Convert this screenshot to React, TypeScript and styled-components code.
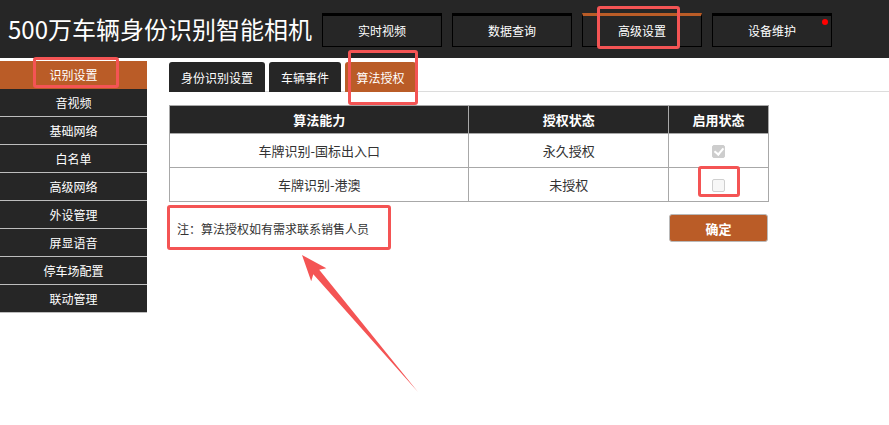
import React from "react";
import styled, { createGlobalStyle, css } from "styled-components";

const ORANGE = "#ba5c27";
const DARK = "#262626";
const MARK = "#f45454";

const GlobalStyle = createGlobalStyle`
  html, body {
    margin: 0;
    padding: 0;
    background: #fff;
  }
  body {
    font-family: "Noto Sans CJK SC", "Noto Sans", "Liberation Sans", sans-serif;
    color: #333;
  }
  * { box-sizing: border-box; }
`;

const Page = styled.div`
  position: relative;
  width: 889px;
  min-height: 425px;
  overflow: hidden;
`;

/* ---------- top bar ---------- */
const Header = styled.header`
  display: flex;
  align-items: flex-start;
  height: 58px;
  background: ${DARK};
`;

const Title = styled.h1`
  margin: 0;
  width: 322px;
  padding-left: 8px;
  font-size: 24px;
  font-weight: 400;
  line-height: 58px;
  color: #fff;
  white-space: nowrap;
`;

const Nav = styled.nav`
  display: flex;
  gap: 10px;
  padding-top: 13px;
`;

const NavButton = styled.div<{ $active?: boolean }>`
  position: relative;
  width: 120px;
  height: 34px;
  display: flex;
  align-items: center;
  justify-content: center;
  border: 1px solid #000;
  border-top: 3px solid ${(p) => (p.$active ? ORANGE : "#000")};
  background: ${DARK};
  color: #fff;
  font-size: 12px;
  line-height: 1;
  cursor: pointer;
`;

const Dot = styled.span`
  position: absolute;
  top: 3px;
  right: 3px;
  width: 6px;
  height: 6px;
  border-radius: 50%;
  background: #ff0000;
`;

/* ---------- body ---------- */
const Body = styled.div`
  display: flex;
  align-items: flex-start;
  padding-top: 3px;
`;

const Sidebar = styled.ul`
  list-style: none;
  margin: 0;
  padding: 0;
  width: 147px;
  flex: none;
  background: ${DARK};
`;

const SideItem = styled.li<{ $active?: boolean }>`
  height: 28px;
  display: flex;
  align-items: center;
  justify-content: center;
  font-size: 12px;
  color: #fff;
  border-bottom: 1px solid #bdbdbd;
  cursor: pointer;
  ${(p) =>
    p.$active &&
    css`
      background: ${ORANGE};
      border-bottom-color: ${ORANGE};
    `}
`;

const Main = styled.main`
  flex: 1;
  padding-left: 22px;
  padding-top: 1px;
`;

const TabBar = styled.div`
  display: flex;
  gap: 4px;
  border-bottom: 1px solid #dcdcdc;
`;

const Tab = styled.div<{ $active?: boolean; $w: number }>`
  width: ${(p) => p.$w}px;
  height: 30px;
  margin-bottom: -1px;
  display: flex;
  align-items: center;
  justify-content: center;
  border-radius: 3px 3px 0 0;
  background: ${(p) => (p.$active ? ORANGE : DARK)};
  color: #fff;
  font-size: 12px;
  cursor: pointer;
`;

const Table = styled.table`
  margin-top: 13px;
  width: 600px;
  border-collapse: collapse;
  font-size: 13px;
  color: #333;
`;

const Th = styled.th<{ $w: number }>`
  width: ${(p) => p.$w}px;
  height: 28px;
  padding: 0;
  background: ${DARK};
  color: #fff;
  font-weight: 700;
  font-size: 13px;
  border: 1px solid #a8a8a8;
  text-align: center;
`;

const Td = styled.td`
  height: 34px;
  padding: 0;
  border: 1px solid #a8a8a8;
  text-align: center;
  vertical-align: middle;
`;

const Check = styled.input.attrs({ type: "checkbox" })`
  appearance: none;
  margin: 0;
  width: 13px;
  height: 13px;
  vertical-align: middle;
  border: 1px solid #cfcfcf;
  border-radius: 2px;
  background: #f7f7f7;
  position: relative;
  top: -1px;
  &:checked {
    background: #cdcdcd;
    border-color: #cdcdcd;
  }
  &:checked::after {
    content: "";
    position: absolute;
    left: 3px;
    top: 0px;
    width: 4px;
    height: 7px;
    border: solid #fff;
    border-width: 0 2px 2px 0;
    transform: rotate(40deg);
  }
`;

const Footer = styled.div`
  width: 600px;
  margin-top: 12px;
  display: flex;
  align-items: center;
  justify-content: space-between;
`;

const Note = styled.p`
  margin: 0;
  padding-left: 8px;
  font-size: 12px;
  color: #333;
`;

const ConfirmButton = styled.button`
  width: 99px;
  height: 28px;
  margin-right: 1px;
  border: 1px solid #b9b9b9;
  border-radius: 3px;
  background: ${ORANGE};
  color: #fff;
  font-family: inherit;
  font-size: 13px;
  font-weight: 700;
  cursor: pointer;
`;

/* ---------- red annotation layer ---------- */
const Mark = styled.div<{ $x: number; $y: number; $w: number; $h: number }>`
  position: absolute;
  left: ${(p) => p.$x}px;
  top: ${(p) => p.$y}px;
  width: ${(p) => p.$w}px;
  height: ${(p) => p.$h}px;
  border: 3px solid ${MARK};
  border-radius: 3px;
  pointer-events: none;
`;

const ArrowLayer = styled.svg`
  position: absolute;
  left: 0;
  top: 0;
  pointer-events: none;
`;

const sideItems = [
  "识别设置",
  "音视频",
  "基础网络",
  "白名单",
  "高级网络",
  "外设管理",
  "屏显语音",
  "停车场配置",
  "联动管理",
];

const rows = [
  { name: "车牌识别-国标出入口", state: "永久授权", on: true },
  { name: "车牌识别-港澳", state: "未授权", on: false },
];

export default function App() {
  return (
    <Page>
      <GlobalStyle />
      <Header>
        <Title>500万车辆身份识别智能相机</Title>
        <Nav>
          <NavButton>实时视频</NavButton>
          <NavButton>数据查询</NavButton>
          <NavButton $active>高级设置</NavButton>
          <NavButton>
            设备维护
            <Dot />
          </NavButton>
        </Nav>
      </Header>

      <Body>
        <Sidebar>
          {sideItems.map((s, i) => (
            <SideItem key={s} $active={i === 0}>
              {s}
            </SideItem>
          ))}
        </Sidebar>

        <Main>
          <TabBar>
            <Tab $w={96}>身份识别设置</Tab>
            <Tab $w={72}>车辆事件</Tab>
            <Tab $w={71} $active>
              算法授权
            </Tab>
          </TabBar>

          <Table>
            <thead>
              <tr>
                <Th $w={300}>算法能力</Th>
                <Th $w={200}>授权状态</Th>
                <Th $w={100}>启用状态</Th>
              </tr>
            </thead>
            <tbody>
              {rows.map((r) => (
                <tr key={r.name}>
                  <Td>{r.name}</Td>
                  <Td>{r.state}</Td>
                  <Td>
                    <Check defaultChecked={r.on} disabled={r.on} />
                  </Td>
                </tr>
              ))}
            </tbody>
          </Table>

          <Footer>
            <Note>注：算法授权如有需求联系销售人员</Note>
            <ConfirmButton>确定</ConfirmButton>
          </Footer>
        </Main>
      </Body>

      <Mark $x={597} $y={6} $w={83} $h={43} />
      <Mark $x={33} $y={57} $w={86} $h={31} />
      <Mark $x={348} $y={50} $w={70} $h={55} />
      <Mark $x={698} $y={166} $w={42} $h={31} />
      <Mark $x={167} $y={205} $w={224} $h={45} />

      <ArrowLayer width={889} height={425} viewBox="0 0 889 425">
        <polygon
          points="302,255 326.4,268.3 319.2,269.8 418,392 313.3,274.3 311.2,281.3"
          fill={MARK}
        />
      </ArrowLayer>
    </Page>
  );
}
